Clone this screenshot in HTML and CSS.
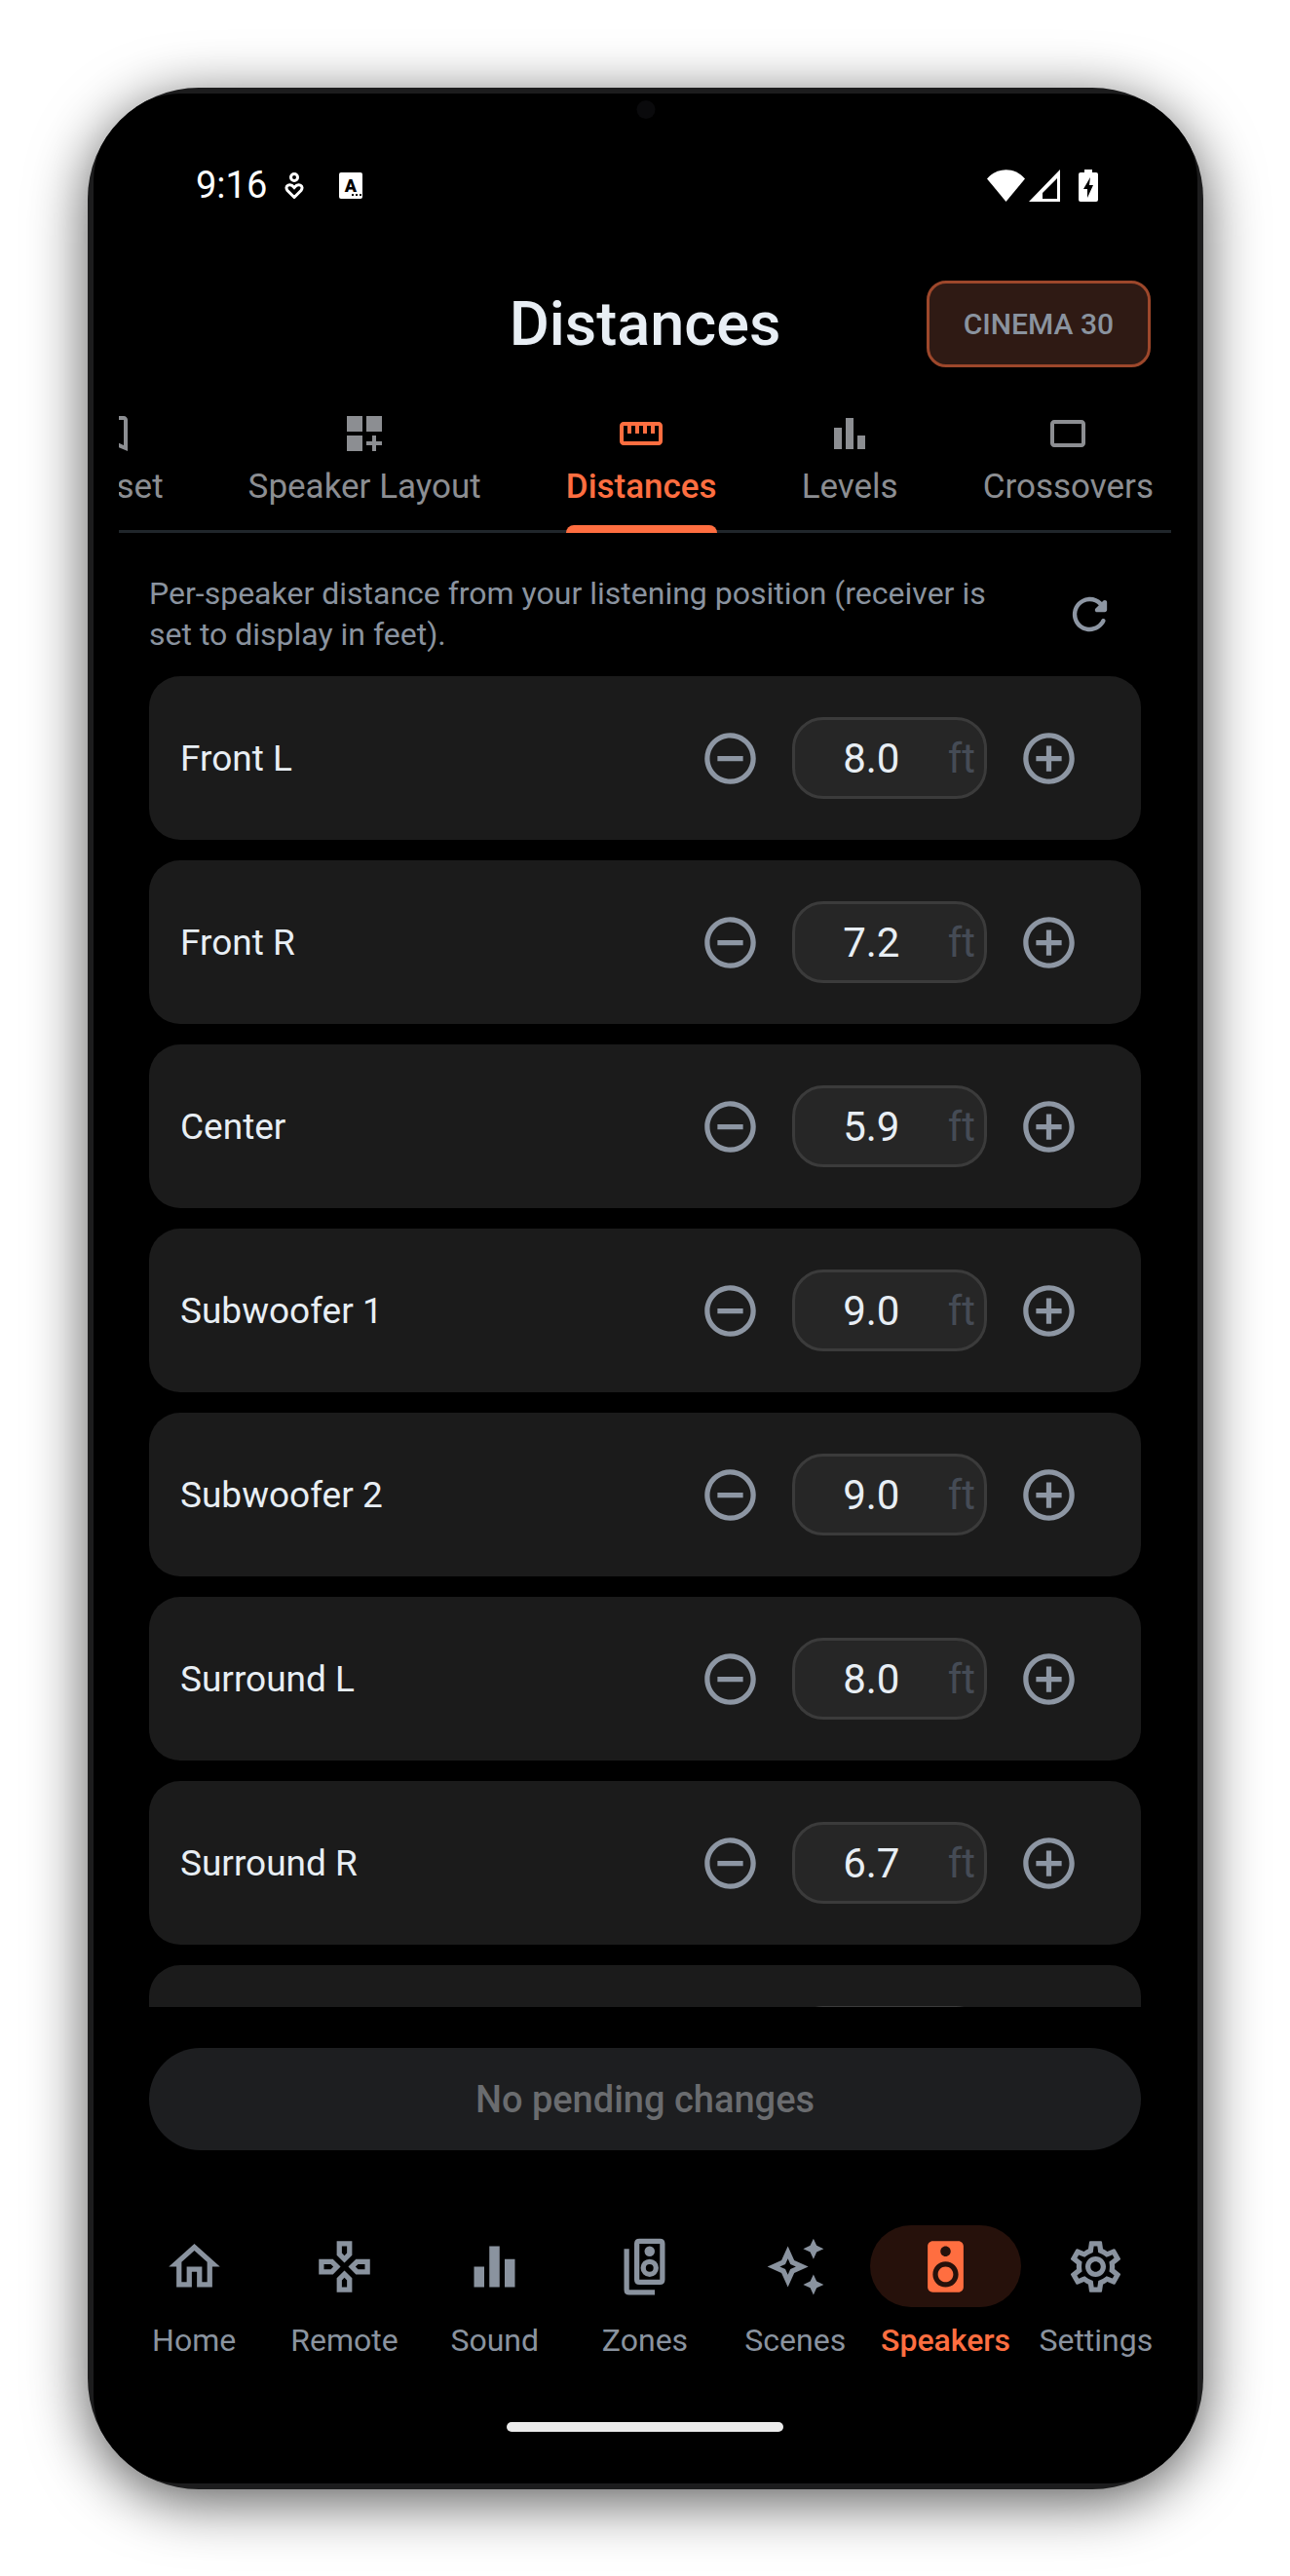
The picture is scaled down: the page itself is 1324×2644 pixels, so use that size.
FILE: index.html
```
<!DOCTYPE html>
<html lang="en">
<head>
    <meta charset="utf-8">
    <meta name="viewport" content="width=device-width, initial-scale=1">
    <title>Distances</title>
    <link rel="stylesheet" href="styles.css">
</head>
<body>
    <svg class="sprite" aria-hidden="true">
        <symbol id="minus" viewBox="0 0 24 24"><path d="M7 11v2h10v-2H7zm5-9C6.48 2 2 6.48 2 12s4.48 10 10 10 10-4.48 10-10S17.52 2 12 2zm0 18c-4.41 0-8-3.59-8-8s3.59-8 8-8 8 3.59 8 8-3.59 8-8 8z"/></symbol>
        <symbol id="plus" viewBox="0 0 24 24"><path d="M13 7h-2v4H7v2h4v4h2v-4h4v-2h-4V7zm-1-5C6.48 2 2 6.48 2 12s4.48 10 10 10 10-4.48 10-10S17.52 2 12 2zm0 18c-4.41 0-8-3.59-8-8s3.59-8 8-8 8 3.59 8 8-3.59 8-8 8z"/></symbol>
    </svg>

    <div class="phone">
        <div class="screen">
            <span class="camera"></span>

            <div class="status-bar">
                <span class="time">9:16</span>
                <svg class="wellbeing" viewBox="0 0 20 27"><circle cx="10" cy="5" r="3.5"/><path d="M10 25.500L3 18.500C-.5 14 5.500 10 10 15.500C14.500 10 20.500 14 17 18.500Z"/></svg>
                <svg class="keyboard" viewBox="0 0 24 27"><rect width="24" height="27" rx="2"/><text x="12" y="20" text-anchor="middle">A</text><path d="M13 22h2v2h-2zm4 0h2v2h-2zm4 0h2v2h-2z"/></svg>
                <span class="spacer"></span>
                <svg class="wifi" viewBox="0 0 39 33"><path d="M19.500 33L0 9.500C10 -3 29 -3 39 9.500Z"/></svg>
                <svg class="signal" viewBox="0 0 32 33"><path fill-rule="evenodd" d="M32 0V33H0zM29 9L14 24V30H29z"/></svg>
                <svg class="battery" viewBox="0 0 20 33"><path fill-rule="evenodd" d="M6 0h8v3h4q2 0 2 2v26q0 2-2 2H2q-2 0-2-2V5q0-2 2-2h4zM12 8L5 20h4v9l6-13h-4z"/></svg>
            </div>

            <header class="header">
                <h1>Distances</h1>
                <button class="receiver" type="button">CINEMA 30</button>
            </header>

            <nav class="tabs" aria-label="Speaker setup">
                <a class="tab" href="#preset">
                    <svg viewBox="0 0 24 24"><path d="M17 3H7c-1.100 0-2 .9-2 2v16l7-3 7 3V5c0-1.100-.9-2-2-2zm0 15l-5-2.180L7 18V5h10v13z"/></svg>
                    Preset
                </a>
                <a class="tab" href="#layout">
                    <svg viewBox="0 0 24 24"><path d="M3 3h8v8H3zm10 0h8v8h-8zM3 13h8v8H3zm15 0h-2v3h-3v2h3v3h2v-3h3v-2h-3z"/></svg>
                    Speaker Layout
                </a>
                <a class="tab active" href="#distances">
                    <svg viewBox="0 0 24 24"><path d="M21 6H3c-1.100 0-2 .9-2 2v8c0 1.100.9 2 2 2h18c1.100 0 2-.9 2-2V8c0-1.100-.9-2-2-2zm0 10H3V8h2v4h2V8h2v4h2V8h2v4h2V8h2v4h2V8h2v8z"/></svg>
                    Distances
                </a>
                <a class="tab" href="#levels">
                    <svg viewBox="0 0 24 24"><path d="M4 9h4v11H4zm12 4h4v7h-4zm-6-9h4v16h-4z"/></svg>
                    Levels
                </a>
                <a class="tab" href="#crossovers">
                    <svg viewBox="0 0 24 24"><path d="M19 5H5c-1.100 0-2 .9-2 2v10c0 1.100.9 2 2 2h14c1.100 0 2-.9 2-2V7c0-1.100-.9-2-2-2zm0 12H5V7h14v10z"/></svg>
                    Crossovers
                </a>
            </nav>

            <div class="intro">
                <p>Per-speaker distance from your listening position (receiver is set to display in feet).</p>
                <button class="icon-button" type="button" aria-label="Refresh">
                    <svg class="refresh" viewBox="0 0 24 24"><path d="M17.650 6.350c-1.630-1.630-3.940-2.570-6.480-2.310-3.670.37-6.690 3.350-7.100 7.020C3.520 15.910 7.270 20 12 20c3.190 0 5.930-1.870 7.210-4.560.32-.67-.16-1.440-.9-1.440-.37 0-.72.2-.88.53-1.130 2.430-3.840 3.970-6.800 3.310-2.220-.49-4.010-2.300-4.480-4.520C5.310 9.440 8.260 6 12 6c1.660 0 3.140.69 4.220 1.780l-1.510 1.510c-.63.63-.19 1.710.7 1.710H19c.55 0 1-.45 1-1V6.410c0-.89-1.080-1.340-1.710-.71l-.64.65z"/></svg>
                </button>
            </div>

            <div class="speakers">
                <div class="speaker">
                    <label for="front-l">Front L</label>
                    <button class="icon-button" type="button" aria-label="Decrease Front L"><svg><use href="#minus"/></svg></button>
                    <div class="distance"><input id="front-l" type="text" inputmode="decimal" value="8.0"><span>ft</span></div>
                    <button class="icon-button" type="button" aria-label="Increase Front L"><svg><use href="#plus"/></svg></button>
                </div>
                <div class="speaker">
                    <label for="front-r">Front R</label>
                    <button class="icon-button" type="button" aria-label="Decrease Front R"><svg><use href="#minus"/></svg></button>
                    <div class="distance"><input id="front-r" type="text" inputmode="decimal" value="7.2"><span>ft</span></div>
                    <button class="icon-button" type="button" aria-label="Increase Front R"><svg><use href="#plus"/></svg></button>
                </div>
                <div class="speaker">
                    <label for="center">Center</label>
                    <button class="icon-button" type="button" aria-label="Decrease Center"><svg><use href="#minus"/></svg></button>
                    <div class="distance"><input id="center" type="text" inputmode="decimal" value="5.9"><span>ft</span></div>
                    <button class="icon-button" type="button" aria-label="Increase Center"><svg><use href="#plus"/></svg></button>
                </div>
                <div class="speaker">
                    <label for="sub-1">Subwoofer 1</label>
                    <button class="icon-button" type="button" aria-label="Decrease Subwoofer 1"><svg><use href="#minus"/></svg></button>
                    <div class="distance"><input id="sub-1" type="text" inputmode="decimal" value="9.0"><span>ft</span></div>
                    <button class="icon-button" type="button" aria-label="Increase Subwoofer 1"><svg><use href="#plus"/></svg></button>
                </div>
                <div class="speaker">
                    <label for="sub-2">Subwoofer 2</label>
                    <button class="icon-button" type="button" aria-label="Decrease Subwoofer 2"><svg><use href="#minus"/></svg></button>
                    <div class="distance"><input id="sub-2" type="text" inputmode="decimal" value="9.0"><span>ft</span></div>
                    <button class="icon-button" type="button" aria-label="Increase Subwoofer 2"><svg><use href="#plus"/></svg></button>
                </div>
                <div class="speaker">
                    <label for="surround-l">Surround L</label>
                    <button class="icon-button" type="button" aria-label="Decrease Surround L"><svg><use href="#minus"/></svg></button>
                    <div class="distance"><input id="surround-l" type="text" inputmode="decimal" value="8.0"><span>ft</span></div>
                    <button class="icon-button" type="button" aria-label="Increase Surround L"><svg><use href="#plus"/></svg></button>
                </div>
                <div class="speaker">
                    <label for="surround-r">Surround R</label>
                    <button class="icon-button" type="button" aria-label="Decrease Surround R"><svg><use href="#minus"/></svg></button>
                    <div class="distance"><input id="surround-r" type="text" inputmode="decimal" value="6.7"><span>ft</span></div>
                    <button class="icon-button" type="button" aria-label="Increase Surround R"><svg><use href="#plus"/></svg></button>
                </div>
                <!-- next row, cut off by the scroll area -->
                <div class="speaker">
                    <div class="distance"></div>
                    <span class="icon-space"></span>
                </div>
            </div>

            <button class="apply" type="button" disabled>No pending changes</button>

            <nav class="bottom-nav" aria-label="Main">
                <a class="nav-item" href="#home">
                    <span class="nav-icon"><svg viewBox="0 0 24 24"><path d="M12 5.690l5 4.500V18h-2v-6H9v6H7v-7.810l5-4.500M12 3L2 12h3v8h6v-6h2v6h6v-8h3L12 3z"/></svg></span>
                    Home
                </a>
                <a class="nav-item" href="#remote">
                    <span class="nav-icon"><svg viewBox="0 0 24 24"><path d="M13 4v2.670l-1 1-1-1V4h2m7 7v2h-2.670l-1-1 1-1H20M6.670 11l1 1-1 1H4v-2h2.670M12 16.330l1 1V20h-2v-2.670l1-1M15 2H9v5.500l3 3 3-3V2zm7 7h-5.500l-3 3 3 3H22V9zM7.500 9H2v6h5.500l3-3-3-3zm4.500 4.500l-3 3V22h6v-5.500l-3-3z"/></svg></span>
                    Remote
                </a>
                <a class="nav-item" href="#sound">
                    <span class="nav-icon"><svg viewBox="0 0 24 24"><path d="M10 20h4V4h-4v16zm-6 0h4v-8H4v8zM16 9v11h4V9h-4z"/></svg></span>
                    Sound
                </a>
                <a class="nav-item" href="#zones">
                    <span class="nav-icon"><svg viewBox="0 0 24 24"><path fill-rule="evenodd" d="M10 1h8q2 0 2 2v14q0 2-2 2h-8q-2 0-2-2V3q0-2 2-2zm0 2v14h8V3z"/><path d="M4 5h2v16h10v2H6q-2 0-2-2z"/><circle cx="14" cy="6" r="2"/><path fill-rule="evenodd" d="M14 9a3.500 3.500 0 1 1 0 7 3.500 3.500 0 0 1 0-7zm0 2a1.500 1.500 0 1 0 0 3 1.500 1.500 0 0 0 0-3z"/></svg></span>
                    Zones
                </a>
                <a class="nav-item" href="#scenes">
                    <span class="nav-icon"><svg viewBox="0 0 24 24"><path d="M19 9l1.250-2.750L23 5l-2.750-1.250L19 1l-1.250 2.750L15 5l2.750 1.250zM19 15l-1.250 2.750L15 19l2.750 1.250L19 23l1.250-2.750L23 19l-2.750-1.250zM11.500 9.500L9 4 6.500 9.500 1 12l5.500 2.500L9 20l2.500-5.500L17 12l-5.500-2.500zm-1.510 3.490L9 15.170l-.99-2.180L5.830 12l2.180-.99L9 8.830l.99 2.180 2.180.99-2.180.99z"/></svg></span>
                    Scenes
                </a>
                <a class="nav-item active" href="#speakers">
                    <span class="nav-icon"><svg viewBox="0 0 24 24"><path d="M17 2H7c-1.100 0-2 .9-2 2v16c0 1.100.9 1.990 2 1.990L17 22c1.100 0 2-.9 2-2V4c0-1.100-.9-2-2-2zm-5 2c1.100 0 2 .9 2 2s-.9 2-2 2c-1.110 0-2-.9-2-2s.89-2 2-2zm0 16c-2.760 0-5-2.240-5-5s2.240-5 5-5 5 2.240 5 5-2.240 5-5 5zm0-8c-1.660 0-3 1.340-3 3s1.340 3 3 3 3-1.340 3-3-1.340-3-3-3z"/></svg></span>
                    Speakers
                </a>
                <a class="nav-item" href="#settings">
                    <span class="nav-icon"><svg viewBox="0 0 24 24"><path d="M19.430 12.980c.04-.32.07-.64.07-.98s-.03-.66-.07-.98l2.110-1.650c.19-.15.24-.42.12-.64l-2-3.460c-.09-.16-.26-.25-.44-.25-.06 0-.12.01-.17.03l-2.490 1c-.52-.4-1.080-.73-1.690-.98l-.38-2.650C14.460 2.180 14.250 2 14 2h-4c-.25 0-.46.18-.49.42l-.38 2.650c-.61.25-1.170.59-1.690.98l-2.490-1c-.06-.02-.12-.03-.18-.03-.17 0-.34.09-.43.25l-2 3.460c-.13.22-.07.49.12.64l2.110 1.650c-.04.32-.07.65-.07.98s.03.66.07.98l-2.110 1.650c-.19.15-.24.42-.12.64l2 3.460c.09.16.26.25.44.25.06 0 .12-.01.17-.03l2.490-1c.52.4 1.080.73 1.690.98l.38 2.650c.03.24.24.42.49.42h4c.25 0 .46-.18.49-.42l.38-2.650c.61-.25 1.170-.59 1.690-.98l2.490 1c.06.02.12.03.18.03.17 0 .34-.09.43-.25l2-3.460c.12-.22.07-.49-.12-.64l-2.110-1.650zm-1.980-1.710c.04.31.05.52.05.73 0 .21-.02.43-.05.73l-.14 1.130.89.7 1.080.84-.7 1.210-1.270-.51-1.040-.42-.9.68c-.43.32-.84.56-1.250.73l-1.060.43-.16 1.130-.2 1.350h-1.400l-.19-1.350-.16-1.130-1.060-.43c-.43-.18-.83-.41-1.230-.71l-.91-.7-1.060.43-1.270.51-.7-1.210 1.080-.84.89-.7-.14-1.130c-.03-.31-.05-.54-.05-.74s.02-.43.05-.73l.14-1.130-.89-.7-1.080-.84.7-1.210 1.270.51 1.040.42.9-.68c.43-.32.84-.56 1.250-.73l1.060-.43.16-1.130.2-1.350h1.390l.19 1.350.16 1.130 1.060.43c.43.18.83.41 1.230.71l.91.7 1.060-.43 1.270-.51.7 1.210-1.070.85-.89.7.14 1.130zM12 8c-2.210 0-4 1.790-4 4s1.790 4 4 4 4-1.790 4-4-1.790-4-4-4zm0 6c-1.100 0-2-.9-2-2s.9-2 2-2 2 .9 2 2-.9 2-2 2z"/></svg></span>
                    Settings
                </a>
            </nav>

            <div class="home-bar"></div>
        </div>
    </div>
</body>
</html>
```
FILE: styles.css
```
* {
    box-sizing: border-box;
}

body {
    margin: 0;
    padding: 90px 89px 89px 90px;
    height: 100vh;
    font-family: Roboto, sans-serif;
    background: #fff;
    color: #e8eef4;
}

svg {
    display: block;
    fill: currentColor;
}

button {
    font-family: inherit;
    cursor: pointer;
}

a {
    color: inherit;
    text-decoration: none;
}

.sprite {
    display: none;
}

.phone {
    height: 100%;
    padding: 6px;
    background: #1c1c1d;
    border-radius: 114px;
    overflow: hidden;
    box-shadow: 0 12px 60px rgba(0, 0, 0, 0.66);
}

.screen {
    position: relative;
    display: flex;
    flex-direction: column;
    height: 100%;
    padding: 0 27px 0 26px;
    background: #000;
    border-radius: 90px;
}

.camera {
    position: absolute;
    top: 7px;
    left: 50%;
    width: 19px;
    height: 19px;
    border-radius: 50%;
    background: #0a0a0c;
    transform: translateX(-50%);
}

/* status bar */
.status-bar {
    display: flex;
    align-items: center;
    flex: none;
    height: 188px;
    padding: 0 75px 0 79px;
    color: #fff;
}

.time {
    margin-right: 18px;
    font-size: 38px;
}

.wellbeing {
    width: 20px;
    height: 27px;
    margin-right: 36px;
    fill: none;
    stroke: currentColor;
    stroke-width: 3;
}

.keyboard {
    width: 24px;
    height: 27px;
}

.keyboard text,
.keyboard path {
    fill: #000;
    font-size: 18px;
    font-weight: 900;
}

.spacer {
    flex: 1;
}

.wifi {
    width: 39px;
    height: 33px;
}

.signal {
    width: 32px;
    height: 33px;
    margin: 0 19px 0 4px;
}

.battery {
    width: 20px;
    height: 33px;
}

/* header */
.header {
    display: grid;
    grid-template-columns: 1fr auto 1fr;
    align-items: center;
    flex: none;
    height: 96px;
    padding: 0 21px;
}

.header h1 {
    grid-column: 2;
    margin: 0;
    font-size: 63px;
    font-weight: 500;
}

.receiver {
    justify-self: end;
    height: 89px;
    padding: 0 35px;
    border: 3px solid #9d472b;
    border-radius: 20px;
    background: #2f1a14;
    color: #8a939f;
    font-size: 30px;
    font-weight: 500;
}

/* tabs */
.tabs {
    display: flex;
    justify-content: flex-end;
    flex: none;
    gap: 87px;
    padding: 41px 18px 0 0;
    overflow: hidden;
    box-shadow: inset 0 -3px #20262b;
}

.tab {
    display: flex;
    flex-direction: column;
    align-items: center;
    flex: none;
    gap: 11px;
    font-size: 35px;
    line-height: 40px;
    white-space: nowrap;
    color: #8c8e92;
}

.tab svg {
    width: 48px;
    height: 48px;
}

.tab::after {
    content: '';
    width: 100%;
    height: 8px;
    margin-top: 8px;
    border-radius: 8px 8px 0 0;
}

.tab.active {
    color: #ff6e40;
    font-weight: 500;
}

.tab.active::after {
    background: #ff6e40;
}

/* intro text */
.intro {
    display: flex;
    align-items: center;
    flex: none;
    gap: 48px;
    margin: 41px 57px 22px 31px;
    color: #8a939f;
}

.intro p {
    flex: 1;
    margin: 0;
    font-size: 32px;
    line-height: 42px;
}

.icon-button {
    display: flex;
    flex: none;
    padding: 0;
    border: none;
    background: none;
    color: #8d96a3;
}

.icon-button svg {
    width: 63px;
    height: 63px;
}

.icon-button .refresh {
    width: 53px;
    height: 53px;
}

/* speaker list */
.speakers {
    display: flex;
    flex-direction: column;
    flex: 1;
    gap: 21px;
    min-height: 0;
    margin: 0 31px;
    overflow: hidden;
}

.speaker {
    display: flex;
    align-items: center;
    justify-content: flex-end;
    flex: none;
    gap: 32px;
    padding: 42px 63px 42px 32px;
    border-radius: 32px;
    background: #1b1b1b;
}

.speaker label {
    flex: 1;
    font-size: 37px;
}

.distance {
    display: flex;
    align-items: center;
    width: 200px;
    height: 84px;
    padding-right: 9px;
    border: 3px solid #3b3b3b;
    border-radius: 32px;
    background: #262626;
    font-size: 42px;
}

.distance input {
    flex: 1;
    min-width: 0;
    padding: 0;
    border: none;
    outline: none;
    background: none;
    color: inherit;
    font: inherit;
    text-align: center;
}

.distance span {
    color: #454b55;
}

.icon-space {
    width: 63px;
}

.apply {
    flex: none;
    height: 105px;
    margin: 42px 31px 0;
    border: none;
    border-radius: 53px;
    background: #1d1e20;
    color: #6a6c6f;
    font-size: 38px;
    font-weight: 500;
    cursor: default;
}

/* bottom navigation */
.bottom-nav {
    display: flex;
    flex: none;
    margin-top: 77px;
}

.nav-item {
    display: flex;
    flex-direction: column;
    align-items: center;
    flex: 1 1 0;
    gap: 16px;
    font-size: 32px;
    line-height: 36px;
    color: #8a939f;
}

.nav-icon {
    display: flex;
    align-items: center;
    justify-content: center;
    width: 100%;
    height: 84px;
    border-radius: 42px;
}

.nav-icon svg {
    width: 63px;
    height: 63px;
}

.nav-item.active {
    color: #ff6e40;
    font-weight: 500;
}

.nav-item.active .nav-icon {
    background: #26110b;
}

.home-bar {
    flex: none;
    align-self: center;
    width: 284px;
    height: 10px;
    margin: 66px 0 53px;
    border-radius: 5px;
    background: #ebebeb;
}
```
